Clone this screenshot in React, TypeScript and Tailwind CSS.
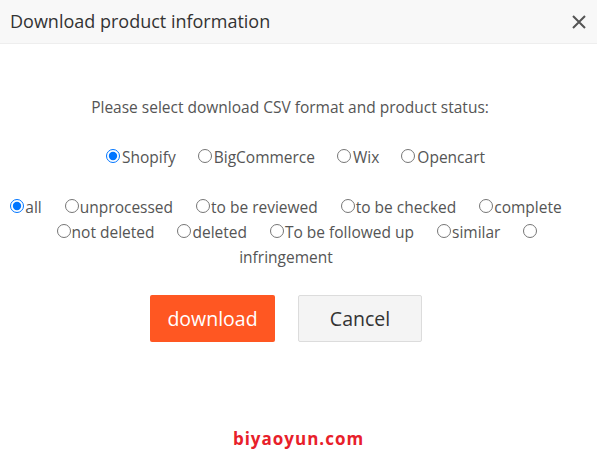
import { useState } from "react";

const formats = ["Shopify", "BigCommerce", "Wix", "Opencart"];
const statuses = [
  "all",
  "unprocessed",
  "to be reviewed",
  "to be checked",
  "complete",
  "not deleted",
  "deleted",
  "To be followed up",
  "similar",
  "infringement",
];

export default function App() {
  const [format, setFormat] = useState("Shopify");
  const [status, setStatus] = useState("all");

  return (
    <div className="w-[597px] h-[465px] bg-white font-['Open_Sans',sans-serif] text-[#333] flex flex-col">
      {/* header */}
      <header className="h-[44px] bg-[#f8f8f8] border-b border-[#eee] flex items-center justify-between pl-[10px] pr-[10px]">
        <h2 className="text-[18px] text-[#333]">Download product information</h2>
        <button className="text-[#555]">
          <svg width="16" height="16" viewBox="0 0 16 16" fill="none" stroke="currentColor" strokeWidth="2">
            <path d="M2 2 L14 14 M14 2 L2 14" />
          </svg>
        </button>
      </header>

      <div className="flex flex-col items-center pt-[51px]">
        <p className="text-[15.5px] text-[#555] leading-[24px] mr-[17px]">Please select download CSV format and product status:</p>

        <div className="mt-[26px] pl-[16px] text-[15.5px] leading-[24px] text-[#555] text-center">
          {formats.map((f) => (
            <label key={f} className="inline-block mr-[22px]">
              <input
                type="radio"
                name="format"
                checked={format === f}
                onChange={() => setFormat(f)}
                className="m-0 mr-[2px] w-[14px] h-[14px] align-[0px]"
              />
              {f}
            </label>
          ))}
        </div>

        <div className="mt-[26px] px-[8px] mr-[2px] text-[15.5px] leading-[25px] text-[#555] text-center">
          {statuses.map((s) => (
            <label key={s} className="mr-[23px]">
              <input
                type="radio"
                name="status"
                checked={status === s}
                onChange={() => setStatus(s)}
                className="m-0 mr-[1px] w-[14px] h-[14px] align-[0px]"
              />
              {s}
            </label>
          ))}
        </div>

        <div className="mt-[25px] mr-[25px] flex gap-[23px]">
          <button className="w-[125px] h-[47px] rounded-[2px] bg-[#ff5722] text-white text-[19.5px]">download</button>
          <button className="w-[124px] h-[47px] rounded-[2px] bg-[#f4f4f4] border border-[#dcdcdc] text-[#333] text-[19.5px]">
            Cancel
          </button>
        </div>

        <div className="mt-[84px] text-[17px] font-bold text-[#e8202a] tracking-[1px]">biyaoyun.com</div>
      </div>
    </div>
  );
}
